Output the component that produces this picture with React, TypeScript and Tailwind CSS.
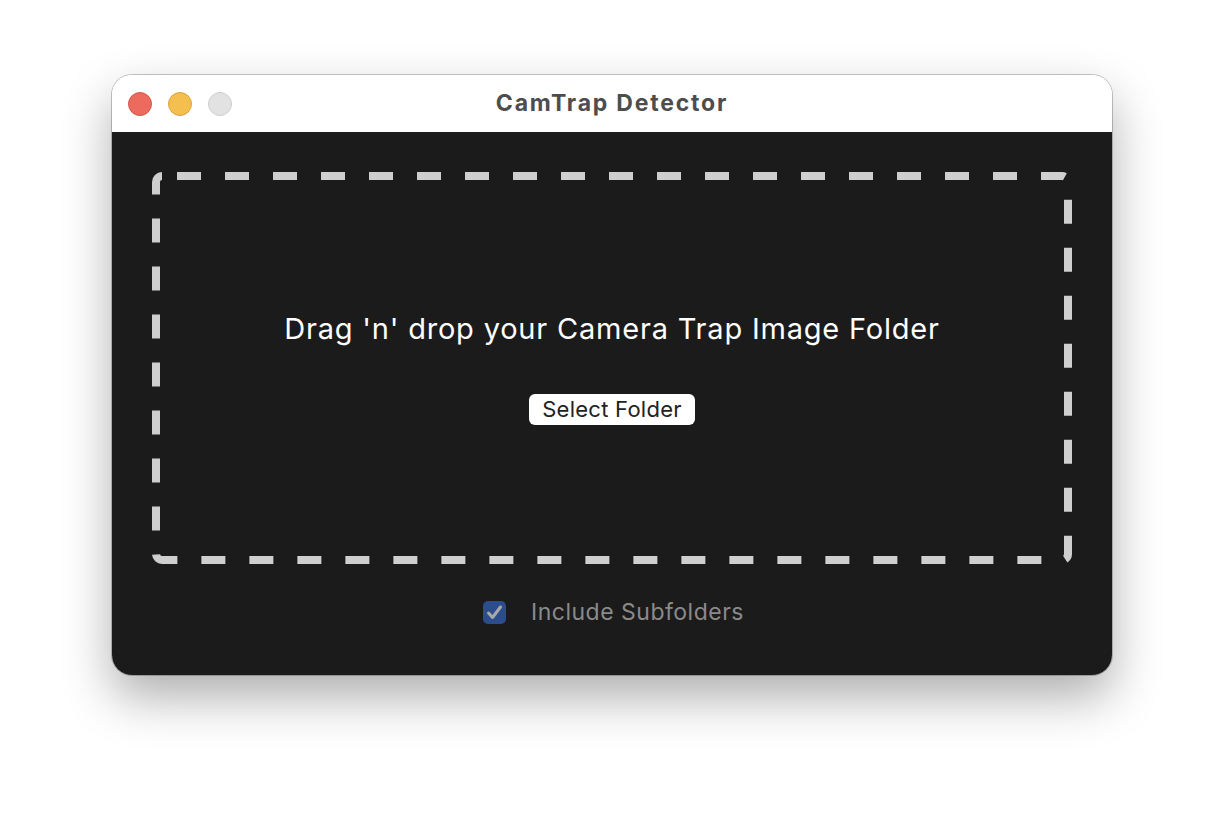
import React from "react";

export default function App() {
  return (
    <div
      className="w-[1224px] h-[824px] bg-white pl-[112px] pt-[75px]"
      style={{ fontFamily: "Inter, 'Noto Sans', sans-serif" }}
    >
      <div className="w-[1000px] h-[600px] rounded-[20px] overflow-hidden flex flex-col shadow-[0_22px_50px_rgba(0,0,0,0.32),0_0_0_1px_rgba(0,0,0,0.22)]">
        <div className="h-[57px] bg-white relative flex items-center justify-center shrink-0">
          <div className="absolute left-[16px] top-[17px] flex gap-[16px]">
            <div className="w-[24px] h-[24px] rounded-full bg-[#ed6a5e] border border-[#d4574b]" />
            <div className="w-[24px] h-[24px] rounded-full bg-[#f5bf4f] border border-[#d9a43c]" />
            <div className="w-[24px] h-[24px] rounded-full bg-[#e2e2e2] border border-[#cdcdcd]" />
          </div>
          <div className="text-[23px] font-bold text-[#4d4d4d] tracking-[1.8px]">CamTrap Detector</div>
        </div>
        <div className="flex-1 bg-[#1b1b1b] px-[40px] pt-[40px] flex flex-col">
          <div className="relative h-[392px] flex flex-col items-center justify-center">
            <svg className="absolute inset-0" width="920" height="392" viewBox="0 0 920 392" fill="none">
              <rect
                x="4"
                y="4"
                width="912"
                height="384"
                rx="6"
                stroke="#cfcfcf"
                strokeWidth="8"
                strokeDasharray="24 24"
                strokeDashoffset="33"
              />
            </svg>
            <div className="relative text-[29px] text-white leading-[34px] tracking-[0.8px]">
              Drag 'n' drop your Camera Trap Image Folder
            </div>
            <button className="relative mt-[48px] h-[31px] px-[13px] rounded-[6px] bg-white text-[22px] text-[#222] leading-[31px] tracking-[0.25px]">
              Select Folder
            </button>
          </div>
          <div className="mt-[36px] flex items-center justify-center gap-[25px] pl-[3px]">
            <div className="w-[23px] h-[23px] rounded-[5px] bg-[#2c4c8c]">
              <svg width="23" height="23" viewBox="0 0 23 23" fill="none">
                <path d="M5.5 12 L9.5 16.5 L17.5 6" stroke="#a8a8a8" strokeWidth="3" strokeLinecap="round" strokeLinejoin="round" />
              </svg>
            </div>
            <div className="text-[23px] text-[#8a8a8a] leading-[24px] tracking-[0.5px]">Include Subfolders</div>
          </div>
        </div>
      </div>
    </div>
  );
}
